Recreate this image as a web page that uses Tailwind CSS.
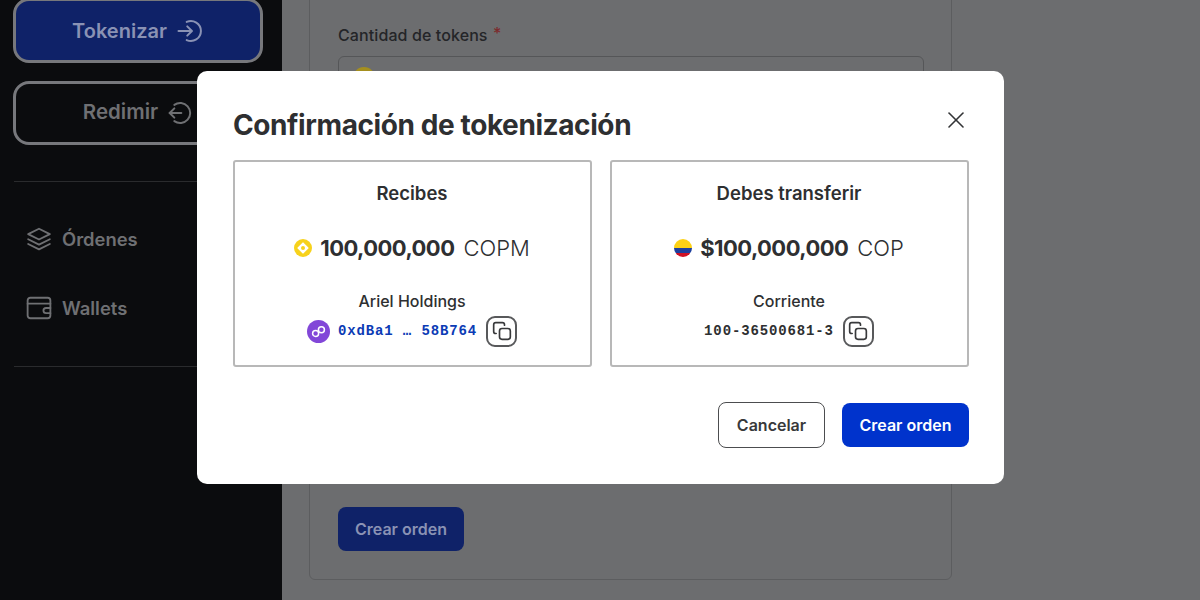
<!DOCTYPE html>
<html lang="es">
<head>
    <meta charset="UTF-8">
    <meta name="viewport" content="width=device-width, initial-scale=1.0">
    <script src="https://cdn.jsdelivr.net/npm/@tailwindcss/browser@4"></script>
    <title>Confirmación de tokenización</title>
</head>
<body class="h-[600px] overflow-hidden bg-[#6c6d6f] font-['Inter',sans-serif]">
<div class="relative flex h-[600px] overflow-hidden">
    <!-- sidebar, already dimmed by the backdrop -->
    <aside class="w-[282px] shrink-0 bg-[#0b0c0e] pl-[13px] pr-[15px]">
        <button class="-mt-[2px] flex h-[65px] w-[250px] items-center justify-center gap-[8px] rounded-[16px] border-[3px] border-[#77787c] bg-[#0f2268] pr-[1px] text-[20px] font-semibold text-[#8a92b4]">
            Tokenizar
            <svg class="size-[28px]" viewBox="0 0 24 24" fill="none" stroke="currentColor" stroke-width="1.7" stroke-linecap="round" stroke-linejoin="round"><path d="M10 4.2a8.6 8.6 0 1 1 0 15.6"/><path d="M3 12h11"/><path d="M10.5 8l4 4-4 4"/></svg>
        </button>
        <button class="mt-[18px] flex h-[64px] w-[250px] items-center justify-center gap-[7px] rounded-[16px] border-[3px] border-[#77787c] pb-[1px] text-[20.5px] font-semibold text-[#6f7073]">
            Redimir
            <svg class="size-[28px]" viewBox="0 0 24 24" fill="none" stroke="currentColor" stroke-width="1.7" stroke-linecap="round" stroke-linejoin="round"><path d="M8 5a8.6 8.6 0 1 1 0 14"/><path d="M4 12h10"/><path d="M8 8l-4 4 4 4"/></svg>
        </button>
        <div class="mt-[36px] ml-px h-px w-[254px] bg-[#2a2b2d]"></div>
        <nav class="mt-[44px] flex flex-col gap-[43px] pl-[13px] text-[18.4px] font-semibold text-[#6f7073]">
            <a class="flex h-[26px] items-center gap-[10px]">
                <svg class="size-[26px]" viewBox="0 0 24 24" fill="none" stroke="currentColor" stroke-width="1.7" stroke-linejoin="round" stroke-linecap="round"><path d="M12 2.5l10 5-10 5-10-5z"/><path d="M2 12.2l10 5 10-5"/><path d="M2 16.6l10 5 10-5"/></svg>
                <span class="pt-[2px]">Órdenes</span>
            </a>
            <a class="flex h-[26px] items-center gap-[10px]">
                <svg class="size-[26px]" viewBox="0 0 24 24" fill="none" stroke="currentColor" stroke-width="1.7" stroke-linejoin="round" stroke-linecap="round"><rect x="1.5" y="2.5" width="21" height="19" rx="2.5"/><path d="M1.5 8h21"/><path d="M22.5 12h-4a2.4 2.4 0 0 0 0 4.8h4"/></svg>
                <span class="pt-[2px]">Wallets</span>
            </a>
        </nav>
        <div class="mt-[45px] ml-px h-px w-[254px] bg-[#2a2b2d]"></div>
    </aside>

    <!-- form behind the dialog -->
    <main class="flex-1 pl-[27px]">
        <section class="-mt-[20px] h-[600px] w-[643px] rounded-[6px] border border-[#5c5d5f] pl-[28px] pr-[27px]">
            <label class="mt-[44px] block h-[20px] text-[16px] leading-[20px] font-medium tracking-[0.1px] text-[#242528]">Cantidad de tokens <span class="relative -top-[2px] ml-[1px] text-[#7c2a2c]">*</span></label>
            <div class="mt-[11px] flex h-[60px] items-start rounded-[6px] border border-[#555658] pt-[10px] pl-[14px]">
                <span class="size-[22px] rounded-full bg-[#a58f1e]"></span>
            </div>
            <button class="mt-[391px] h-[44px] w-[126px] rounded-[8px] bg-[#0f2268] text-[16px] font-semibold text-[#8a92b4]">Crear orden</button>
        </section>
    </main>

    <!-- dialog -->
    <div class="absolute inset-0 flex justify-center pt-[71px] pl-px">
        <div class="h-[413px] w-[807px] rounded-[10px] bg-white pr-[35px] pl-[36px]">
            <div class="flex h-[89px] items-start justify-between">
                <h2 class="mt-[35px] text-[28px] leading-[38px] font-bold tracking-[-0.4px] text-[#2e2f31]">Confirmación de tokenización</h2>
                <svg class="mt-[37px] mr-[1px] size-[24px] text-[#333436]" viewBox="0 0 24 24" fill="none" stroke="currentColor" stroke-width="1.6" stroke-linecap="round"><path d="M5 5l14 14"/><path d="M19 5L5 19"/></svg>
            </div>
            <div class="grid w-[736px] grid-cols-2 gap-[18px]">
                <div class="flex h-[207px] flex-col items-center rounded-[3px] border-2 border-[#b8b8b8] pt-[19px] pr-px text-[#2e2f31]">
                    <h3 class="h-[24px] text-[18.5px] leading-[24px] font-semibold">Recibes</h3>
                    <div class="mt-[28px] flex h-[30px] items-center text-[22px]">
                        <svg class="mr-[8px] size-[18px]" viewBox="0 0 18 18"><circle cx="9" cy="9" r="9" fill="#f7d21c"/><path d="M9 4.2L13.8 9 9 13.8 4.2 9z" fill="#fff" stroke="#fff" stroke-width="1.6" stroke-linejoin="round"/><circle cx="9" cy="9" r="2" fill="#f7d21c"/></svg>
                        <span class="font-bold tracking-[-0.55px]">100,000,000</span>
                        <span class="ml-[9px] font-light">COPM</span>
                    </div>
                    <p class="mt-[27px] h-[22px] text-[16px] leading-[22px] font-medium">Ariel Holdings</p>
                    <div class="mt-[3px] flex h-[32px] items-center">
                        <svg class="mr-[8px] size-[23px]" viewBox="0 0 23 23" fill="none"><circle cx="11.5" cy="11.5" r="11.5" fill="#8247d8"/><circle cx="8.6" cy="13.4" r="3" stroke="#fff" stroke-width="1.5"/><circle cx="14.4" cy="9.8" r="3" stroke="#fff" stroke-width="1.5"/></svg>
                        <span class="font-['Liberation_Mono',monospace] text-[14px] font-bold tracking-[0.87px] whitespace-pre text-[#0b3bb5]">0xdBa1 … 58B764</span>
                        <button class="ml-[9px] flex size-[31px] items-center justify-center rounded-[9px] border-2 border-[#58595b] text-[#38393b]">
                            <svg class="size-[20px]" viewBox="0 0 24 24" fill="none" stroke="currentColor" stroke-width="2" stroke-linejoin="round" stroke-linecap="round"><rect x="9" y="9" width="13" height="13" rx="3"/><path d="M15 5V4.5A2.5 2.5 0 0 0 12.5 2h-8A2.5 2.5 0 0 0 2 4.5v8A2.5 2.5 0 0 0 4.5 15H5"/></svg>
                        </button>
                    </div>
                </div>
                <div class="flex h-[207px] flex-col items-center rounded-[3px] border-2 border-[#b8b8b8] pt-[19px] pr-px text-[#2e2f31]">
                    <h3 class="h-[24px] text-[18.5px] leading-[24px] font-semibold">Debes transferir</h3>
                    <div class="mt-[28px] flex h-[30px] items-center text-[22px]">
                        <span class="mr-[8px] flex size-[18px] flex-col overflow-hidden rounded-full">
                            <span class="h-[9px] bg-[#fcd116]"></span>
                            <span class="h-[5px] bg-[#1d3f9e]"></span>
                            <span class="h-[4px] bg-[#ce1126]"></span>
                        </span>
                        <span class="font-bold tracking-[-0.55px]">$100,000,000</span>
                        <span class="ml-[9px] font-light">COP</span>
                    </div>
                    <p class="mt-[27px] h-[22px] text-[16px] leading-[22px] font-medium">Corriente</p>
                    <div class="mt-[3px] flex h-[32px] items-center">
                        <span class="font-['Liberation_Mono',monospace] text-[14px] font-bold tracking-[0.87px] text-[#2e2f31]">100-36500681-3</span>
                        <button class="ml-[9px] flex size-[31px] items-center justify-center rounded-[9px] border-2 border-[#58595b] text-[#38393b]">
                            <svg class="size-[20px]" viewBox="0 0 24 24" fill="none" stroke="currentColor" stroke-width="2" stroke-linejoin="round" stroke-linecap="round"><rect x="9" y="9" width="13" height="13" rx="3"/><path d="M15 5V4.5A2.5 2.5 0 0 0 12.5 2h-8A2.5 2.5 0 0 0 2 4.5v8A2.5 2.5 0 0 0 4.5 15H5"/></svg>
                        </button>
                    </div>
                </div>
            </div>
            <div class="mt-[35px] flex justify-end gap-[17px]">
                <button class="h-[46px] w-[107px] rounded-[8px] border border-[#4c4d4f] text-[16px] font-semibold text-[#38393b]">Cancelar</button>
                <button class="h-[44px] w-[127px] self-center rounded-[8px] bg-[#0033cc] text-[16px] font-semibold text-white">Crear orden</button>
            </div>
        </div>
    </div>
</div>
</body>
</html>
